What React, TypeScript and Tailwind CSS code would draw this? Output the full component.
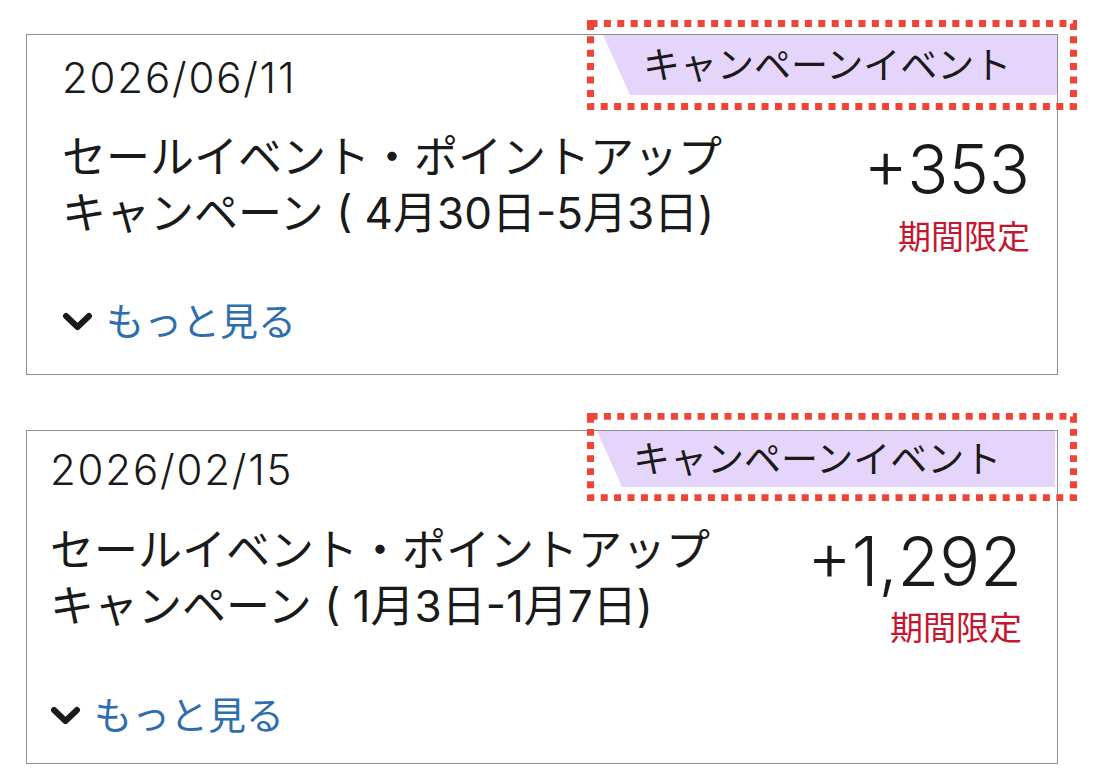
import React from 'react';

type PointEntry = {
  date: string;
  title: string[];
  amount: string;
  note: string;
  layout: {
    padLeft: string;
    padRight: string;
    datePad: string;
    tag: string;
    tagText: string;
    tagClip: string;
    bodyGap: string;
    amountGap: string;
    noteGap: string;
    moreGap: string;
    padBottom: string;
    marker: string;
  };
};

const ENTRIES: PointEntry[] = [
  {
    date: '2026/06/11',
    title: ['セールイベント・ポイントアップ', 'キャンペーン ( 4月30日-5月3日)'],
    amount: '+353',
    note: '期間限定',
    layout: {
      padLeft: 'pl-[35px]',
      padRight: 'pr-[27px]',
      datePad: 'pt-[22px]',
      tag: 'h-[60px] w-[454px] mr-0',
      tagText: 'pl-[40px]',
      tagClip: '[clip-path:polygon(0_0,100%_0,100%_100%,27px_100%)]',
      bodyGap: 'mt-[30px]',
      amountGap: 'mt-[6px]',
      noteGap: 'mt-[18px]',
      moreGap: 'mt-[48px]',
      padBottom: 'pb-[34px]',
      marker: 'top-[-15px] h-[90px]',
    },
  },
  {
    date: '2026/02/15',
    title: ['セールイベント・ポイントアップ', 'キャンペーン ( 1月3日-1月7日)'],
    amount: '+1,292',
    note: '期間限定',
    layout: {
      padLeft: 'pl-[23px]',
      padRight: 'pr-[35px]',
      datePad: 'pt-[18px]',
      tag: 'h-[56px] w-[458px] mr-[2px]',
      tagText: 'pl-[36px]',
      tagClip: '[clip-path:polygon(0_0,100%_0,100%_100%,25px_100%)]',
      bodyGap: 'mt-[31px]',
      amountGap: 'mt-[5px]',
      noteGap: 'mt-[17px]',
      moreGap: 'mt-[51px]',
      padBottom: 'pb-[29px]',
      marker: 'top-[-18px] h-[88px]',
    },
  },
];

function DottedMarker({ className }: { className: string }) {
  // red square-dot frame drawn over the campaign label
  return (
    <svg
      className={`pointer-events-none absolute right-[-20px] w-[490px] ${className}`}
      preserveAspectRatio="none"
      viewBox="0 0 490 90"
    >
      <rect
        x="3.5"
        y="3.5"
        width="483"
        height="83"
        fill="none"
        stroke="#ef4437"
        strokeWidth="7"
        strokeDasharray="7 6.4"
      />
    </svg>
  );
}

function Chevron() {
  return (
    <svg width="31" height="19" viewBox="0 0 31 19" className="shrink-0">
      <polyline
        points="4,4 15.5,15 27,4"
        fill="none"
        stroke="#1a1a1a"
        strokeWidth="6"
        strokeLinecap="round"
        strokeLinejoin="round"
      />
    </svg>
  );
}

function PointCard({ entry }: { entry: PointEntry }) {
  const l = entry.layout;
  return (
    <div className={`relative flex flex-col border border-[#8e8e8e] bg-white ${l.padBottom}`}>
      <div className="flex items-start justify-between">
        <div className={`${l.padLeft} ${l.datePad} text-[42px] font-light leading-none tracking-[1.8px] text-[#1a1a1a]`}>
          {entry.date}
        </div>
        <div className={`flex items-center bg-[#e6d5fa] ${l.tag} ${l.tagClip}`}>
          <span className={`${l.tagText} text-[37px] leading-none text-[#1a1a1a]`}>
            キャンペーンイベント
          </span>
        </div>
      </div>

      <div className={`flex items-start justify-between ${l.bodyGap} ${l.padLeft} ${l.padRight}`}>
        <div className="text-[44px] leading-[56px] text-[#1a1a1a]">
          {entry.title.map((line) => (
            <div key={line} className="whitespace-pre">
              {line}
            </div>
          ))}
        </div>
        <div className="flex flex-col items-end">
          <div className={`${l.amountGap} text-[68px] font-light leading-none text-[#1a1a1a]`}>{entry.amount}</div>
          <div className={`${l.noteGap} text-[33px] leading-none text-[#c4162f]`}>{entry.note}</div>
        </div>
      </div>

      <div className={`flex items-center gap-[13px] ${l.moreGap} ${l.padLeft}`}>
        <Chevron />
        <span className="text-[38px] leading-none text-[#2f6eae]">もっと見る</span>
      </div>

      <DottedMarker className={l.marker} />
    </div>
  );
}

export default function App() {
  return (
    <div className="min-h-[782px] w-[1100px] bg-white font-['Inter','Noto_Sans_CJK_JP',sans-serif] font-normal">
      <div className="flex w-[1032px] flex-col gap-[55px] pl-[26px] pt-[34px] box-content">
        {ENTRIES.map((e) => (
          <PointCard key={e.date} entry={e} />
        ))}
      </div>
    </div>
  );
}
